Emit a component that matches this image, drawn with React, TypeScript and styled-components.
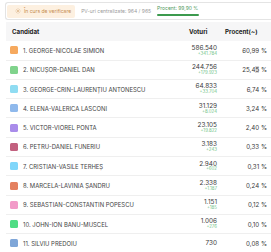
import styled, { createGlobalStyle } from 'styled-components';

const GlobalStyle = createGlobalStyle`
  body {
    margin: 0;
    background: #fff;
    font-family: Inter, "Noto Sans", sans-serif;
    color: #2b2b2b;
  }
`;

const Page = styled.div`
  padding: 2px 0 0 5px;
  width: 271px;
  box-sizing: border-box;
  overflow: hidden;
`;

const StatusBar = styled.div`
  display: flex;
  align-items: center;
  gap: 6px;
  height: 18px;
  box-sizing: border-box;
  border: 1px solid #e4e4e4;
  border-right: none;
  border-radius: 3px 0 0 3px;
  padding: 0 1px;
`;

const Badge = styled.div`
  display: flex;
  align-items: center;
  gap: 3px;
  height: 13px;
  padding: 0 4px 0 8px;
  background: #fdf0e0;
  border-radius: 2px;
  color: #c58a4c;
  font-size: 5px;
`;

const Muted = styled.span`
  color: #9a9a9a;
  font-size: 5px;
`;

const Progress = styled.div`
  display: flex;
  flex-direction: column;
  gap: 3px;
  color: #4f9a5c;
  font-size: 5px;
  margin-top: -1px;
`;

const ProgressBar = styled.div`
  height: 1.5px;
  width: 42px;
  background: #3c9a4e;
  border-radius: 1px;
`;

const Table = styled.div`
  margin: 2px 0 0 1px;
  display: grid;
  grid-template-columns: 1fr 38px 50px;
  grid-auto-rows: 19.3px;
`;

const HeadCell = styled.div<{ $pad?: number }>`
  display: flex;
  align-items: center;
  background: #f6f6f7;
  font-weight: 700;
  font-size: 6.2px;
  color: #222;
  padding-left: ${(p) => p.$pad ?? 0}px;
`;

const Cell = styled.div`
  display: flex;
  align-items: center;
  border-bottom: 1px solid #efefef;
  box-sizing: border-box;
  background: #fff;
`;

const NameCell = styled(Cell)`
  gap: 5px;
  padding-left: 4px;
  font-size: 5.9px;
  color: #444;
  white-space: nowrap;
`;

const Swatch = styled.span<{ $color: string }>`
  width: 8px;
  height: 8px;
  border-radius: 1.5px;
  background: ${(p) => p.$color};
  flex: none;
`;

const VotesCell = styled(Cell)`
  flex-direction: column;
  justify-content: center;
  align-items: flex-end;
  padding-right: 4px;
  font-size: 6.4px;
  color: #3a3a3a;
  line-height: 1;
`;

const Delta = styled.span`
  font-size: 4.4px;
  color: #6fbf86;
  margin-top: 0.5px;
`;

const PercentCell = styled(Cell)`
  justify-content: flex-end;
  padding-right: 4px;
  font-size: 6.2px;
  color: #3a3a3a;
`;

const Caret = styled.span`
  background: #d9d9d9;
`;

const gear = (
  <svg width="6" height="6" viewBox="0 0 24 24" fill="none" stroke="#c58a4c" strokeWidth="2">
    <circle cx="12" cy="12" r="3" />
    <path d="M12 2v3M12 19v3M2 12h3M19 12h3M4.9 4.9l2.1 2.1M17 17l2.1 2.1M4.9 19.1L7 17M17 7l2.1-2.1" />
  </svg>
);

type Row = { name: string; color: string; votes: string; delta?: string; pct: string };

const rows: Row[] = [
  { name: '1. GEORGE-NICOLAE SIMION', color: '#f6a95e', votes: '586.540', delta: '+341.784', pct: '60,99 %' },
  { name: '2. NICUȘOR-DANIEL DAN', color: '#80d38c', votes: '244.756', delta: '+179.923', pct: '25,45 %' },
  { name: '3. GEORGE-CRIN-LAURENȚIU ANTONESCU', color: '#8fdcf2', votes: '64.833', delta: '+33.704', pct: '6,74 %' },
  { name: '4. ELENA-VALERICA LASCONI', color: '#8fb9ec', votes: '31.129', delta: '+8.024', pct: '3,24 %' },
  { name: '5. VICTOR-VIOREL PONTA', color: '#a98cea', votes: '23.105', delta: '+19.822', pct: '2,40 %' },
  { name: '6. PETRU-DANIEL FUNERIU', color: '#c2607f', votes: '3.183', delta: '+243', pct: '0,33 %' },
  { name: '7. CRISTIAN-VASILE TERHEȘ', color: '#80d6fa', votes: '2.940', delta: '+602', pct: '0,31 %' },
  { name: '8. MARCELA-LAVINIA ȘANDRU', color: '#e4805f', votes: '2.338', delta: '+1.187', pct: '0,24 %' },
  { name: '9. SEBASTIAN-CONSTANTIN POPESCU', color: '#f29ac8', votes: '1.151', delta: '+185', pct: '0,12 %' },
  { name: '10. JOHN-ION BANU-MUSCEL', color: '#4fdd84', votes: '1.006', delta: '+276', pct: '0,10 %' },
  { name: '11. SILVIU PREDOIU', color: '#7fa6d8', votes: '730', pct: '0,08 %' },
];

export default function App() {
  return (
    <Page>
      <GlobalStyle />
      <StatusBar>
        <Badge>
          {gear}
          În curs de verificare
        </Badge>
        <Muted>PV-uri centralizate: 964 / 965</Muted>
        <Progress>
          Procent: 99,90 %
          <ProgressBar />
        </Progress>
      </StatusBar>
      <Table>
        <HeadCell $pad={6}>Candidat</HeadCell>
        <HeadCell $pad={6}>Voturi</HeadCell>
        <HeadCell $pad={4}>Procent(~)</HeadCell>
        {rows.map((r) => (
          <>
            <NameCell key={r.name + 'n'}>
              <Swatch $color={r.color} />
              {r.name}
            </NameCell>
            <VotesCell key={r.name + 'v'}>
              {r.votes}
              {r.delta && <Delta>{r.delta}</Delta>}
            </VotesCell>
            <PercentCell key={r.name + 'p'}>
              {r.pct === '25,45 %' ? (
                <span>
                  25,4<Caret>5</Caret> %
                </span>
              ) : (
                r.pct
              )}
            </PercentCell>
          </>
        ))}
      </Table>
    </Page>
  );
}
